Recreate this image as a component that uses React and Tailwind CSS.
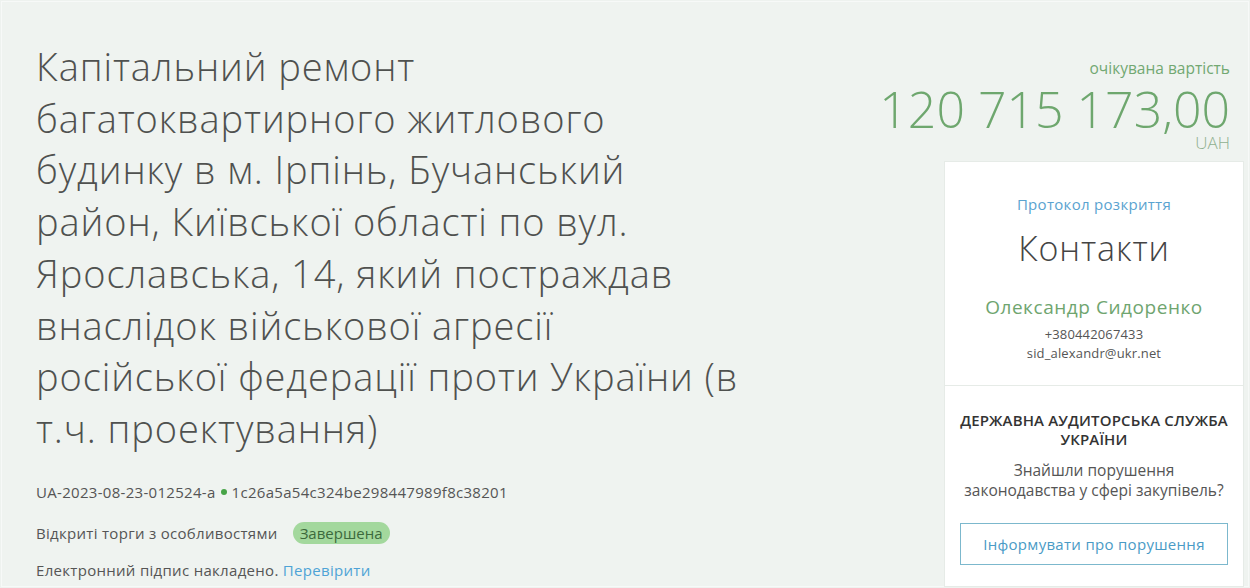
const title =
  'Капітальний ремонт багатоквартирного житлового будинку в м. Ірпінь, Бучанський район, Київської області по вул. Ярославська, 14, який постраждав внаслідок військової агресії російської федерації проти України (в т.ч. проектування)';

function TenderInfo() {
  return (
    <div className="flex-1 min-w-0 pl-[34px] pt-[39px]">
      <h1 className="max-w-[714px] text-[38px] leading-[51.7px] font-light tracking-[0.9px] text-[#4f514f]">
        {title}
      </h1>

      <div className="mt-[27px] flex items-center text-[15px] leading-[20px] tracking-[0.3px] text-[#555]">
        <span>UA-2023-08-23-012524-a</span>
        <span className="mx-[5px] inline-block w-[6px] h-[6px] rounded-full bg-[#47a447]" />
        <span>1c26a5a54c324be298447989f8c38201</span>
      </div>

      <div className="mt-[20px] flex items-center text-[15px] leading-[22px] tracking-[0.3px] text-[#555]">
        <span>Відкриті торги з особливостями</span>
        <span className="ml-[15px] px-[7px] rounded-full bg-[#a3d89d] tracking-normal text-[#3c6a3c]">
          Завершена
        </span>
      </div>

      <div className="mt-[16px] text-[15px] leading-[20px] tracking-[0.3px] text-[#555]">
        Електронний підпис накладено. <span className="text-[#4ea3d6]">Перевірити</span>
      </div>
    </div>
  );
}

function ContactCard() {
  return (
    <div className="bg-white border border-[#e6ebe7] text-center">
      <div className="pt-[32px] pb-[22px] px-[15px]">
        <div className="text-[15px] leading-[20px] tracking-[0.3px] text-[#5aa3d0]">Протокол розкриття</div>
        <div className="mt-[14px] text-[34px] leading-[40px] font-light tracking-[0.9px] text-[#444]">
          Контакти
        </div>
        <div className="mt-[27px] text-[19px] leading-[24px] tracking-[0.55px] text-[#6fa56f]">
          Олександр Сидоренко
        </div>
        <div className="mt-[6px] text-[13px] leading-[19px] tracking-[0.15px] text-[#555]">+380442067433</div>
        <div className="text-[13px] leading-[19px] tracking-[0.15px] text-[#555]">sid_alexandr@ukr.net</div>
      </div>
      <div className="border-t border-[#e6ebe7] pt-[25px] pb-[21px] px-[12px]">
        <div className="text-[15px] leading-[19px] font-semibold tracking-[0.15px] text-[#333] uppercase">
          Державна аудиторська служба України
        </div>
        <div className="mt-[11px] text-[15.5px] leading-[20px] text-[#555]">
          Знайшли порушення <br />
          законодавства у сфері закупівель?
        </div>
        <button
          type="button"
          className="mt-[23px] mx-[3px] w-[calc(100%-6px)] h-[42px] border border-[#7cb8cd] text-[15px] tracking-[0.3px] text-[#4a9bc6]"
        >
          Інформувати про порушення
        </button>
      </div>
    </div>
  );
}

export default function App() {
  return (
    <div
      className="w-[1250px] h-[588px] overflow-hidden bg-[#eef2ef] p-px"
      style={{ fontFamily: '"Open Sans", "Noto Sans", sans-serif' }}
    >
      <div className="h-full border border-[#f7f9f8] bg-[#eff3f0] flex">
        <TenderInfo />
        <div className="w-[300px] shrink-0 mr-[4px]">
          <div className="pt-[54px] pr-[14px] flex flex-col items-end">
            <div className="text-[15.5px] leading-[24px] text-[#72a872]">очікувана вартість</div>
            <div className="mt-[4px] whitespace-nowrap text-[50px] leading-[50px] font-light text-[#6ea76e]">
              120 715 173,00
            </div>
            <div className="-mt-[1px] text-[17px] leading-[20px] font-light text-[#8fb08f]">UAH</div>
          </div>
          <div className="mt-[8px]">
            <ContactCard />
          </div>
        </div>
      </div>
    </div>
  );
}
